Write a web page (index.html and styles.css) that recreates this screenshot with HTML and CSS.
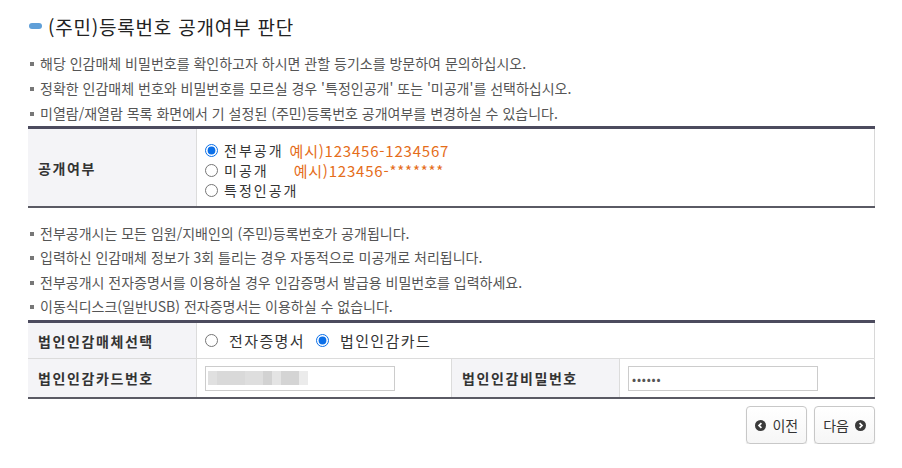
FILE: index.html
```html
<!DOCTYPE html>
<html lang="ko">
<head>
    <meta charset="UTF-8">
    <meta name="viewport" content="width=device-width, initial-scale=1.0">
    <title>(주민)등록번호 공개여부 판단</title>
    <link rel="stylesheet" href="styles.css">
</head>
<body>
    <div class="wrap">
        <h2 class="title"><span class="title-mark"></span>(주민)등록번호 공개여부 판단</h2>

        <ul class="notice">
            <li>해당 인감매체 비밀번호를 확인하고자 하시면 관할 등기소를 방문하여 문의하십시오.</li>
            <li>정확한 인감매체 번호와 비밀번호를 모르실 경우 '특정인공개' 또는 '미공개'를 선택하십시오.</li>
            <li>미열람/재열람 목록 화면에서 기 설정된 (주민)등록번호 공개여부를 변경하실 수 있습니다.</li>
        </ul>

        <table class="form-table">
            <tr>
                <th class="label">공개여부</th>
                <td class="value radios-col">
                    <label class="radio"><input type="radio" name="open" checked> 전부공개 <span class="sample">예시)123456-1234567</span></label>
                    <label class="radio"><input type="radio" name="open"> 미공개 <span class="sample sample-pad">예시)123456-*******</span></label>
                    <label class="radio"><input type="radio" name="open"> 특정인공개</label>
                </td>
            </tr>
        </table>

        <ul class="notice notice-tight">
            <li>전부공개시는 모든 임원/지배인의 (주민)등록번호가 공개됩니다.</li>
            <li>입력하신 인감매체 정보가 3회 틀리는 경우 자동적으로 미공개로 처리됩니다.</li>
            <li>전부공개시 전자증명서를 이용하실 경우 인감증명서 발급용 비밀번호를 입력하세요.</li>
            <li>이동식디스크(일반USB) 전자증명서는 이용하실 수 없습니다.</li>
        </ul>

        <table class="form-table form-table-card">
            <tr class="row-media">
                <th class="label">법인인감매체선택</th>
                <td class="value" colspan="3">
                    <label class="radio radio-inline"><input type="radio" name="media"> 전자증명서</label>
                    <label class="radio radio-inline"><input type="radio" name="media" checked> 법인인감카드</label>
                </td>
            </tr>
            <tr class="row-input">
                <th class="label">법인인감카드번호</th>
                <td class="value value-mid">
                    <div class="text-box">
                        <span class="mosaic">
                            <span class="m1"></span><span class="m2"></span><span class="m3"></span><span class="m4"></span><span class="m5"></span><span class="m6"></span><span class="m7"></span>
                        </span>
                    </div>
                </td>
                <th class="label label-mid">법인인감비밀번호</th>
                <td class="value">
                    <div class="text-box password">••••••</div>
                </td>
            </tr>
        </table>

        <div class="btn-area">
            <button class="btn-step">
                <svg class="step-icon" viewBox="0 0 12 12"><circle cx="6" cy="6" r="6" fill="#3a3a3a"/><path d="M7 3.4 L4.4 6 L7 8.6" fill="none" stroke="#fff" stroke-width="1.9"/></svg>
                이전
            </button>
            <button class="btn-step">
                다음
                <svg class="step-icon" viewBox="0 0 12 12"><circle cx="6" cy="6" r="6" fill="#3a3a3a"/><path d="M5 3.4 L7.6 6 L5 8.6" fill="none" stroke="#fff" stroke-width="1.9"/></svg>
            </button>
        </div>
    </div>
</body>
</html>
```

FILE: styles.css
```css
body {
    margin: 0;
    padding: 0;
    background: #fff;
    color: #333;
    font-family: "Noto Sans CJK KR", "Noto Sans", sans-serif;
}

.wrap {
    width: 847px;
    margin-left: 28px;
    padding-top: 12px;
}

.title {
    display: flex;
    align-items: center;
    margin: 0;
    height: 28px;
    font-size: 19px;
    font-weight: normal;
    color: #222;
    letter-spacing: 0.8px;
}

.title-mark {
    display: inline-block;
    width: 13px;
    height: 6px;
    margin: 0 6px 0 1px;
    border-radius: 3px;
    background: #5f9fd8;
}

.notice {
    list-style: none;
    margin: 11px 0 0;
    padding: 0;
    font-size: 14px;
    color: #555;
}

.notice li {
    position: relative;
    height: 25px;
    line-height: 25px;
    padding-left: 12px;
}

.notice li::before {
    content: "";
    position: absolute;
    left: 2px;
    top: 11px;
    width: 4px;
    height: 4px;
    background: #777;
}

.notice-tight {
    margin-top: 13px;
}

.notice-tight li {
    height: 24.3px;
    line-height: 24px;
}

.form-table {
    width: 100%;
    border-collapse: collapse;
    border-top: 3px solid #4c4b5e;
    border-bottom: 2px solid #5a5a64;
    border-right: 1px solid #d8d8d8;
    margin-top: 0;
}

.form-table-card {
    margin-top: 2px;
}

.form-table .label {
    width: 158px;
    padding: 0 0 0 10px;
    background: #f4f4f7;
    border-right: 1px solid #dcdcdc;
    text-align: left;
    font-size: 14px;
    font-weight: bold;
    color: #333;
    letter-spacing: 1.6px;
}

.form-table .label-mid {
    width: 157px;
    border-left: 1px solid #dcdcdc;
}

.form-table .value {
    padding: 0 0 0 7px;
    font-size: 14px;
    color: #333;
}

.form-table .value-mid {
    width: 247px;
}

.radios-col {
    padding-top: 11px !important;
    padding-bottom: 6px !important;
}

.radio {
    display: flex;
    align-items: center;
    height: 20px;
    letter-spacing: 2px;
}

.radio input {
    width: 13px;
    height: 13px;
    margin: 0 6px 0 1px;
    accent-color: #0b6fe8;
}

.radio-inline {
    display: inline-flex;
    margin-right: 6px;
    font-size: 15px;
    letter-spacing: 1.4px;
}

.radio-inline input {
    margin-right: 11px;
}

.sample {
    margin-left: 6px;
    font-size: 15px;
    color: #e56d1a;
    letter-spacing: 0.8px;
}

.sample-pad {
    margin-left: 25px;
}

.row-media th,
.row-media td {
    height: 35px;
    border-bottom: 1px solid #dcdcdc;
}

.row-input th,
.row-input td {
    height: 38px;
}

.text-box {
    box-sizing: border-box;
    width: 190px;
    height: 25px;
    margin-left: 1px;
    border: 1px solid #ccc;
    background: #fff;
    display: flex;
    align-items: center;
    padding-left: 2px;
}

.mosaic {
    display: flex;
    height: 14px;
}

.mosaic span {
    display: block;
    height: 14px;
    width: 9px;
}

.mosaic .m1 { width: 9px; background: #e0e0e0; }
.mosaic .m2 { width: 28px; background: #d9d9d9; }
.mosaic .m3 { width: 18px; background: #dedede; }
.mosaic .m4 { width: 9px; background: #d2d2d2; }
.mosaic .m5 { width: 9px; background: #e4e4e4; }
.mosaic .m6 { width: 18px; background: #d4d4d4; }
.mosaic .m7 { width: 9px; background: #ebebeb; }

.password {
    padding-left: 3px;
    font-size: 12px;
    color: #555;
    letter-spacing: 0.8px;
}

.btn-area {
    display: flex;
    justify-content: flex-end;
    gap: 7px;
    margin-top: 7px;
}

.btn-step {
    display: flex;
    align-items: center;
    gap: 6px;
    height: 38px;
    padding: 0 8px;
    border: 1px solid #c8c8c8;
    border-radius: 4px;
    background: linear-gradient(#fff, #f6f6f6);
    box-shadow: 0 1px 1px rgba(0, 0, 0, 0.12);
    font-family: "Noto Sans CJK KR", sans-serif;
    font-size: 14px;
    color: #333;
    cursor: pointer;
}

.step-icon {
    width: 11px;
    height: 11px;
}
```
